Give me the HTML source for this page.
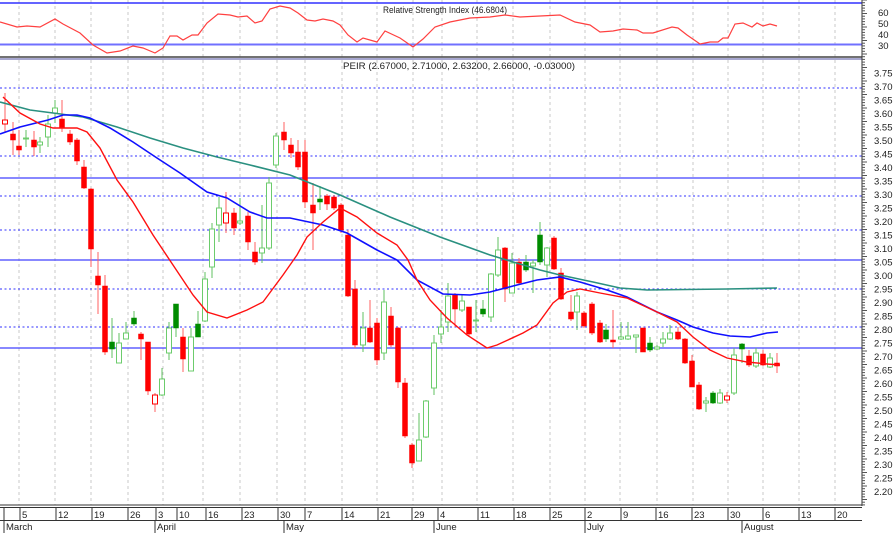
<!DOCTYPE html>
<html><head><meta charset="utf-8"><style>
html,body{margin:0;padding:0;background:#fff;}
svg{display:block;font-family:"Liberation Sans",sans-serif;}
text{font-size:9.5px;fill:#222;}
</style></head><body>
<svg id="s" width="894" height="535" viewBox="0 0 894 535" xmlns="http://www.w3.org/2000/svg">
<g id="grid" stroke="#c8c8c8" stroke-dasharray="3,3" stroke-width="1"></g>
<!-- RSI panel -->
<line x1="0" y1="3" x2="862" y2="3" stroke="#3030ff" stroke-width="1.5"/>
<line x1="0" y1="44.5" x2="862" y2="44.5" stroke="#7070ff" stroke-width="2"/>
<line x1="0" y1="57" x2="862" y2="57" stroke="#444" stroke-width="1.5"/>
<line x1="0" y1="59" x2="862" y2="59" stroke="#5050a0" stroke-width="1"/>
<text x="445" y="13" text-anchor="middle" textLength="124" lengthAdjust="spacingAndGlyphs">Relative Strength Index (46.6804)</text>
<text x="459" y="69" text-anchor="middle" textLength="232" lengthAdjust="spacingAndGlyphs">PEIR (2.67000, 2.71000, 2.63200, 2.66000, -0.03000)</text>
<polyline fill="none" stroke="#ff4040" stroke-width="1.2" points="0,22 17,27 27,26 40,27 55,19 63,24 80,33 93,45 107,53 120,51 133,46 143,48 155,53 163,48 170,36 177,36 183,40 192,35 198,35 207,23 218,14 230,15 238,17 247,16 255,23 262,21 270,9 280,6 290,8 298,13 307,20 315,21 323,19 333,21 340,25 348,35 357,42 363,38 377,42 385,31 400,38 413,47 423,39 435,27 450,22 470,18 490,17 505,15 520,17 540,16 560,15 575,22 590,25 600,32 613,31 623,29 637,30 643,33 653,33 672,27 678,28 687,35 700,44 710,42 718,42 723,38 728,38 735,24 743,23 752,27 757,23 763,26 770,24 777,26"/>
<text x="878" y="16">60</text><text x="878" y="27">50</text><text x="878" y="38">40</text><text x="878" y="49">30</text>
<!-- horizontal levels -->
<g stroke="#3030ff" stroke-width="1" stroke-dasharray="2,2.5">
<line x1="0" y1="88" x2="862" y2="88"/><line x1="0" y1="156" x2="862" y2="156"/>
<line x1="0" y1="196" x2="862" y2="196"/><line x1="0" y1="230" x2="862" y2="230"/>
<line x1="0" y1="289" x2="862" y2="289"/><line x1="0" y1="327" x2="862" y2="327"/>
</g>
<g stroke="#4040ff" stroke-width="1.3">
<line x1="0" y1="178" x2="862" y2="178"/><line x1="0" y1="260" x2="862" y2="260"/><line x1="0" y1="348" x2="862" y2="348"/>
</g>
<g id="candles"></g>
<!-- MAs -->
<polyline fill="none" stroke="#2a9080" stroke-width="1.6" points="0,102 30,110 53,113 83,117 117,127 150,138 183,148 217,157 250,165 290,175 340,195 390,217 440,237 490,255 540,270 560,275 593,282 620,288 647,290 727,289 777,288"/>
<polyline fill="none" stroke="#1010ff" stroke-width="1.6" points="0,134 20,127 48,120 63,115 77,115 90,118 110,128 133,142 157,158 180,173 207,192 227,198 250,212 267,218 290,218 323,225 347,233 377,250 397,260 417,280 443,294 470,295 490,292 517,285 537,280 560,277 580,282 607,290 627,297 657,312 677,320 693,327 713,333 730,336 750,337 767,333 778,332"/>
<polyline fill="none" stroke="#ff1010" stroke-width="1.4" points="3,97 20,113 40,124 53,128 77,128 87,132 100,148 117,180 133,202 153,235 173,265 193,295 207,312 227,318 247,310 263,302 283,275 297,255 307,237 323,222 340,208 357,217 377,233 397,245 408,260 417,280 430,300 447,318 467,335 487,348 497,345 523,333 537,325 553,303 567,292 580,289 600,293 627,298 657,312 677,322 693,337 710,350 727,358 747,362 767,364 780,365"/>
<!-- price axis -->
<line x1="862" y1="0" x2="862" y2="506" stroke="#333" stroke-width="1"/>
<g id="ticks" stroke="#555" stroke-width="1"></g>
<g id="plabels"></g>
<!-- date axis -->
<line x1="0" y1="505" x2="862" y2="505" stroke="#333" stroke-width="1"/>
<line x1="0" y1="507.5" x2="862" y2="507.5" stroke="#333" stroke-width="1"/>
<line x1="0" y1="520.5" x2="862" y2="520.5" stroke="#333" stroke-width="1"/>
<g id="dates" stroke="#333" stroke-width="1"></g>
</svg>
<script>
var NS="http://www.w3.org/2000/svg",s=document.getElementById('s');
function el(p,t,a,txt){var e=document.createElementNS(NS,t);for(var k in a)e.setAttribute(k,a[k]);if(txt)e.textContent=txt;document.getElementById(p).appendChild(e);return e;}
[19,55,91,128,163,203,240,277,305,342,377,413,442,477,513,550,585,620,657,693,728,763,799,835].forEach(function(x){el('grid','line',{x1:x,y1:0,x2:x,y2:505});});
var C=[[5,120,124,93,133,'r'],[13,134,140,122,155,'R'],[19,146,150,130,155,'R'],[26,138,139,130,147,'g'],[34,140,147,131,156,'R'],[40,142,145,137,153,'g'],[48,124,137,115,147,'g'],[55,108,113,100,123,'g'],[62,119,128,100,132,'R'],[70,134,142,130,145,'R'],[77,140,161,138,165,'R'],[84,167,188,160,189,'R'],[91,189,249,188,267,'R'],[98,276,285,252,314,'R'],[105,286,352,275,355,'R'],[112,342,349,318,358,'G'],[119,343,363,333,363,'g'],[126,333,339,322,339,'g'],[134,318,324,311,326,'G'],[141,334,339,332,360,'R'],[148,342,391,342,395,'R'],[155,395,404,393,412,'r'],[162,379,395,368,396,'g'],[169,328,353,322,360,'g'],[176,304,328,304,337,'G'],[183,337,359,328,372,'R'],[191,337,371,328,371,'g'],[198,324,337,311,337,'G'],[205,279,321,272,322,'g'],[212,229,267,223,278,'g'],[219,208,225,197,242,'g'],[226,213,223,192,233,'r'],[234,213,228,208,235,'R'],[240,221,223,198,225,'g'],[248,216,242,212,250,'R'],[255,252,262,242,265,'R'],[262,248,253,205,263,'g'],[269,183,248,177,250,'g'],[276,136,165,133,168,'g'],[284,132,140,122,150,'R'],[291,145,153,138,158,'R'],[298,152,167,140,170,'R'],[305,152,202,140,208,'R'],[313,205,213,183,250,'R'],[320,199,202,186,210,'G'],[327,196,204,194,210,'R'],[334,197,208,195,210,'R'],[341,205,230,203,233,'R'],[348,235,296,230,297,'R'],[355,289,345,280,348,'R'],[363,328,345,312,352,'g'],[370,328,342,300,343,'R'],[377,323,360,318,365,'R'],[384,302,353,290,360,'g'],[391,316,345,307,347,'R'],[398,328,382,327,388,'R'],[405,383,436,378,438,'R'],[412,445,463,443,468,'R'],[419,440,461,413,461,'g'],[426,401,437,400,438,'g'],[434,343,388,335,395,'g'],[441,327,334,310,343,'g'],[448,296,322,283,332,'g'],[455,295,309,293,327,'R'],[462,301,310,295,312,'g'],[469,307,334,307,337,'R'],[476,320,321,300,332,'g'],[483,309,314,300,317,'G'],[491,274,317,273,322,'g'],[498,250,275,237,277,'g'],[505,248,289,247,302,'R'],[512,263,293,253,293,'g'],[519,262,283,258,285,'R'],[526,262,270,255,272,'G'],[533,263,266,260,293,'g'],[540,235,262,222,265,'G'],[547,248,265,247,277,'g'],[554,238,269,236,270,'R'],[561,273,299,268,300,'R'],[571,312,319,295,321,'R'],[577,296,312,292,330,'g'],[584,313,326,311,328,'R'],[592,304,333,302,335,'R'],[600,323,342,320,343,'R'],[606,330,339,324,342,'G'],[613,340,342,310,348,'R'],[621,337,339,322,340,'g'],[628,336,339,322,340,'g'],[636,335,337,335,353,'g'],[643,328,352,328,352,'R'],[650,343,350,337,352,'G'],[657,347,349,345,350,'g'],[663,339,343,332,347,'g'],[670,333,339,325,340,'g'],[678,332,339,327,340,'R'],[685,339,363,338,364,'R'],[692,361,387,355,387,'R'],[699,385,409,382,410,'R'],[706,401,403,397,412,'g'],[713,393,403,391,404,'G'],[720,393,403,389,404,'g'],[727,396,400,392,403,'r'],[734,355,393,348,395,'g'],[742,344,349,343,363,'G'],[749,356,365,350,367,'R'],[756,353,366,348,368,'g'],[763,354,365,350,366,'R'],[770,358,367,353,368,'g'],[777,363,366,353,373,'R']];
C.forEach(function(c){var x=c[0],t=c[5],red=(t=='R'||t=='r'),fill=(t=='R'||t=='G');
var col=red?'#ff0000':(fill?'#008c00':'#6ccc6c');
el('candles','line',{x1:x,y1:c[3],x2:x,y2:c[4],stroke:red?'#ff6060':'#60c060','stroke-width':1});
var h=Math.max(c[2]-c[1],1);
el('candles','rect',{x:x-2.5,y:c[1],width:5,height:h,fill:fill?col:'#fff',stroke:col,'stroke-width':fill?0.5:1});});
for(var y=0;y<505;y+=2.7){el('ticks','line',{x1:862,y1:y,x2:(Math.round(y/2.7)%5==0)?867:865,y2:y});}
for(var i=0;i<=31;i++){var p=3.75-i*0.05,y=73+i*13.5;el('plabels','text',{x:874,y:y+3.5},p.toFixed(2));}
var D=[[20,'5'],[56,'12'],[92,'19'],[128,'26'],[156,'3'],[177,'10'],[206,'16'],[242,'23'],[278,'30'],[305,'7'],[342,'14'],[378,'21'],[412,'29'],[438,'4'],[478,'11'],[514,'18'],[550,'25'],[585,'2'],[621,'9'],[656,'16'],[692,'23'],[728,'30'],[763,'6'],[799,'13'],[835,'20']];
el('dates','line',{x1:4,y1:508,x2:4,y2:532});
D.forEach(function(d){el('dates','line',{x1:d[0],y1:508,x2:d[0],y2:520});var t=el('dates','text',{x:d[0]+2,y:518,stroke:'none'},d[1]);});
[[4,'March'],[155,'April'],[284,'May'],[434,'June'],[585,'July'],[742,'August']].forEach(function(m){el('dates','line',{x1:m[0],y1:521,x2:m[0],y2:533});el('dates','text',{x:m[0]+2,y:530,stroke:'none'},m[1]);});
</script>
</body></html>
